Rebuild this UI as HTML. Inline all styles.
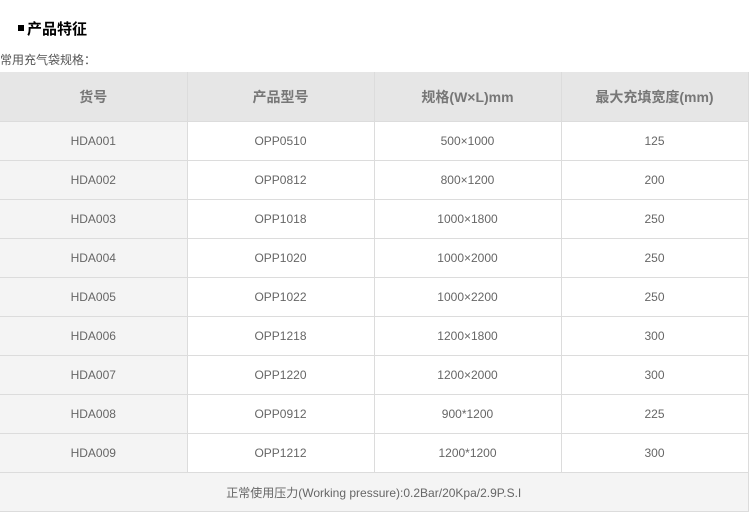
<!DOCTYPE html>
<html><head><meta charset="utf-8"><style>
body{margin:0;background:#fff;font-family:"Liberation Sans","Noto Sans CJK SC",sans-serif;width:753px;height:517px;overflow:hidden;position:relative}
.t{position:absolute;left:18px;top:19px;font-size:15px;font-weight:bold;color:#000;line-height:22px}
.t i{display:inline-block;width:6px;height:6px;background:#000;margin-right:3px;vertical-align:middle;position:relative;top:-2px}
.s{position:absolute;left:0;top:51px;font-size:12px;color:#555;line-height:18px}
table{position:absolute;left:0;top:72px;border-collapse:collapse;width:748px;table-layout:fixed}
td,th{border:1px solid #dcdcdc;text-align:center;color:#666;font-size:12px;height:38px;padding:0}
th{background:#e6e6e6;height:49px;font-size:14px;font-weight:bold;color:#777}
tr:first-child th{border-top:none}
td:first-child,th:first-child{border-left:none}
td:first-child{background:#f4f4f4}
td.f{background:#f4f4f4}
</style></head><body>
<div class="t"><i></i>产品特征</div>
<div class="s">常用充气袋规格：</div>
<table>
<colgroup><col style="width:187px"><col style="width:187px"><col style="width:187px"><col style="width:187px"></colgroup>
<tr><th>货号</th><th>产品型号</th><th>规格(W×L)mm</th><th>最大充填宽度(mm)</th></tr>
<tr><td>HDA001</td><td>OPP0510</td><td>500×1000</td><td>125</td></tr>
<tr><td>HDA002</td><td>OPP0812</td><td>800×1200</td><td>200</td></tr>
<tr><td>HDA003</td><td>OPP1018</td><td>1000×1800</td><td>250</td></tr>
<tr><td>HDA004</td><td>OPP1020</td><td>1000×2000</td><td>250</td></tr>
<tr><td>HDA005</td><td>OPP1022</td><td>1000×2200</td><td>250</td></tr>
<tr><td>HDA006</td><td>OPP1218</td><td>1200×1800</td><td>300</td></tr>
<tr><td>HDA007</td><td>OPP1220</td><td>1200×2000</td><td>300</td></tr>
<tr><td>HDA008</td><td>OPP0912</td><td>900*1200</td><td>225</td></tr>
<tr><td>HDA009</td><td>OPP1212</td><td>1200*1200</td><td>300</td></tr>
<tr><td class="f" colspan="4">正常使用压力(Working pressure):0.2Bar/20Kpa/2.9P.S.I</td></tr>
</table>
</body></html>
